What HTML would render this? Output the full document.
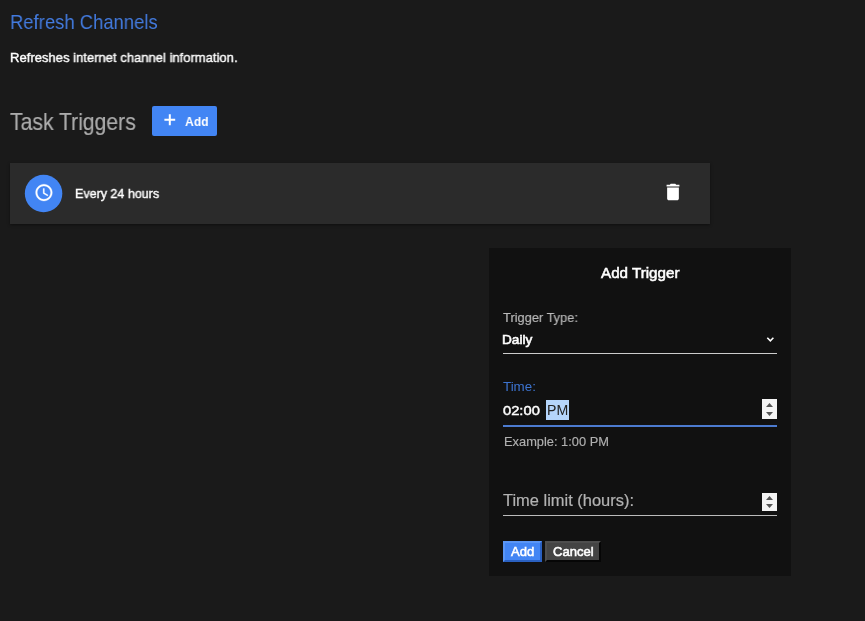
<!DOCTYPE html>
<html>
<head>
<meta charset="utf-8">
<title>Scheduled Task</title>
<style>
html,body{margin:0;padding:0;}
body{width:865px;height:621px;background:#1a1a1a;position:relative;overflow:hidden;font-family:"Liberation Sans",sans-serif;color:#fff;}
.abs{position:absolute;white-space:nowrap;line-height:1;transform-origin:0 0;}
.abs,#dlg .a,#ctext,#addbtn .t,.btn span{will-change:transform;}
#h1{left:9.6px;top:12px;font-size:20.6px;color:#437bdf;transform:scaleX(.896);}
#desc{left:10.3px;top:50.8px;font-size:13.1px;color:#fff;transform:scaleX(.996);-webkit-text-stroke:.4px #fff;}
#h2{left:9.9px;top:110.8px;font-size:23.4px;color:#acacac;transform:scaleX(.904);-webkit-text-stroke:.2px #acacac;}
#addbtn{left:152px;top:106px;width:65px;height:30px;background:#4285f4;border-radius:2px;}
#addbtn .plus{position:absolute;left:8px;top:4px;width:20px;height:20px;}
#addbtn .t{position:absolute;left:33.1px;top:8.55px;font-size:13.7px;font-weight:bold;line-height:1;color:#fff;transform-origin:0 0;transform:scaleX(.885);}
#card{left:10px;top:163px;width:700px;height:61px;background:#2b2b2b;box-shadow:0 1px 3px rgba(0,0,0,.45);}
#circ{position:absolute;left:0;top:0;}
#ctext{position:absolute;left:65px;top:23.9px;font-size:13px;line-height:1;color:#fff;transform-origin:0 0;transform:scaleX(.962);-webkit-text-stroke:.4px #fff;white-space:nowrap;}
#trash{position:absolute;left:652.150px;top:18.100px;width:22px;height:22px;}
#dlg{left:489px;top:248px;width:302px;height:328px;background:#111;}
#dlg .a{position:absolute;white-space:nowrap;line-height:1;transform-origin:0 0;}
#title{left:111.500px;top:16.6px;font-size:15.2px;color:#fff;transform:scaleX(1.0);-webkit-text-stroke:.55px #fff;}
#l1{left:13.8px;top:63.7px;font-size:12.9px;color:#bbb;transform:scaleX(.995);-webkit-text-stroke:.15px #bbb;}
#v1{left:13px;top:84.9px;font-size:13.5px;color:#fff;transform:scaleX(1.01);-webkit-text-stroke:.6px #fff;}
#chev{left:276.650px;top:87.500px;width:8.700px;height:6.960px;}
#u1{left:14px;top:105px;width:274px;height:1px;background:#ccc;}
#l2{left:14px;top:132.8px;font-size:12.9px;color:#3d74d0;transform:scaleX(1.035);}
#v2{left:14.4px;top:155.5px;font-size:13.7px;color:#fff;transform:scaleX(1.075);-webkit-text-stroke:.45px #fff;}
#pm{left:57px;top:152px;width:23px;height:20px;background:#b5d5fb;}
#pmt{left:57.8px;top:155.5px;font-size:13.8px;color:#222;transform:scaleX(1.025);}
.spin{position:absolute;width:15px;background:#f4f4f4;}
#u2{left:14px;top:177px;width:274px;height:2px;background:#4c7bd0;}
#ex{left:15.1px;top:187.5px;font-size:12.600px;color:#b0b0b0;transform:scaleX(1.02);-webkit-text-stroke:.15px #b0b0b0;}
#l3{left:14.1px;top:245.1px;font-size:15.6px;color:#b2b2b2;transform:scaleX(1.055);-webkit-text-stroke:.2px #b2b2b2;}
#u3{left:14px;top:267px;width:274px;height:1px;background:#bbb;}
.btn{position:absolute;top:293px;height:21px;box-sizing:border-box;border:2px solid #666;}
.btn span{position:absolute;top:1.7px;font-size:13px;line-height:1;color:#fff;white-space:nowrap;transform-origin:0 0;-webkit-text-stroke:.55px #fff;}
#b1{left:14px;width:39px;background:#4285f4;border-color:#5a96f6 #2a60c0 #2a60c0 #5a96f6;}
#b1 span{left:6.200px;transform:scaleX(1.0);}
#b2{left:56px;width:56px;background:#444;border-color:#4e4e4e #060606 #060606 #4e4e4e;}
#b2 span{left:6.200px;transform:scaleX(1.005);}
</style>
</head>
<body>
<div id="h1" class="abs">Refresh Channels</div>
<div id="desc" class="abs">Refreshes internet channel information.</div>
<div id="h2" class="abs">Task Triggers</div>
<div id="addbtn" class="abs">
  <svg class="plus" viewBox="0 0 20 20"><path d="M4.400 8.750h10.800v2H4.400zM8.800 4.350h2v10.800h-2z" fill="#fff"/></svg>
  <span class="t">Add</span>
</div>
<div id="card" class="abs">
  <svg id="circ" width="70" height="61" viewBox="0 0 70 61"><circle cx="33.570" cy="30.450" r="18.750" fill="#4285f4"/><g transform="translate(23.950 19.600) scale(.8333)"><path fill="#fff" stroke="#fff" stroke-width=".35" d="M11.990 2C6.470 2 2 6.480 2 12s4.470 10 9.990 10C17.520 22 22 17.520 22 12S17.520 2 11.990 2zM12 20c-4.420 0-8-3.580-8-8s3.580-8 8-8 8 3.580 8 8-3.580 8-8 8zm.500-13H11v6l5.250 3.150.750-1.230-4.500-2.670z"/></g></svg>
  <div id="ctext">Every 24 hours</div>
  <svg id="trash" viewBox="0 0 24 24"><path fill="#fff" d="M5.600 19c0 1.100.900 2 2 2h8.800c1.100 0 2-.900 2-2V7.100H5.600V19zM19 4h-3.500l-1-1h-5l-1 1H5v2h14V4z"/></svg>
</div>
<div id="dlg" class="abs">
  <div id="title" class="a">Add Trigger</div>
  <div id="l1" class="a">Trigger Type:</div>
  <div id="v1" class="a">Daily</div>
  <svg id="chev" class="a" viewBox="0 0 10 8"><path d="M1.500 2L5 5.500 8.500 2" stroke="#fff" stroke-width="1.800" fill="none"/></svg>
  <div id="u1" class="a"></div>
  <div id="l2" class="a">Time:</div>
  <div id="v2" class="a">02:00</div>
  <div id="pm" class="a"></div>
  <div id="pmt" class="a">PM</div>
  <div class="spin" style="left:273px;top:151px;height:20px;">
    <svg width="15" height="20" viewBox="0 0 15 20"><path d="M4 8h7L7.500 4zM4 13h7L7.500 17z" fill="#555"/></svg>
  </div>
  <div id="u2" class="a"></div>
  <div id="ex" class="a">Example: 1:00 PM</div>
  <div id="l3" class="a">Time limit (hours):</div>
  <div class="spin" style="left:273px;top:245px;height:18px;">
    <svg width="15" height="18" viewBox="0 0 15 18"><path d="M4 7h7L7.500 3zM4 11h7L7.500 15z" fill="#555"/></svg>
  </div>
  <div id="u3" class="a"></div>
  <div id="b1" class="btn"><span>Add</span></div>
  <div id="b2" class="btn"><span>Cancel</span></div>
</div>
</body>
</html>
